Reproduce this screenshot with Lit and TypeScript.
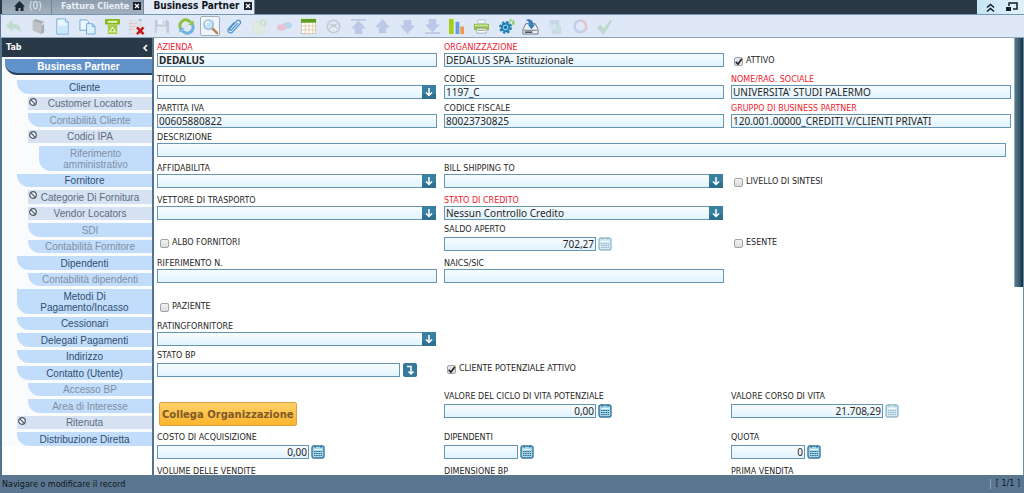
import { LitElement, html, svg, css, nothing } from "lit";
import { customElement, state } from "lit/decorators.js";
import { classMap } from "lit/directives/class-map.js";

interface NavItem {
  text: string;
  level: 1 | 2 | 3;
  readOnly?: boolean;
}

const NAV: NavItem[] = [
  { text: "Cliente", level: 1 },
  { text: "Customer Locators", level: 2, readOnly: true },
  { text: "Contabilità Cliente", level: 2 },
  { text: "Codici IPA", level: 2, readOnly: true },
  { text: "Riferimento amministrativo", level: 3 },
  { text: "Fornitore", level: 1 },
  { text: "Categorie Di Fornitura", level: 2, readOnly: true },
  { text: "Vendor Locators", level: 2, readOnly: true },
  { text: "SDI", level: 2 },
  { text: "Contabilità Fornitore", level: 2 },
  { text: "Dipendenti", level: 1 },
  { text: "Contabilità dipendenti", level: 2 },
  { text: "Metodi Di Pagamento/Incasso", level: 1 },
  { text: "Cessionari", level: 1 },
  { text: "Delegati Pagamenti", level: 1 },
  { text: "Indirizzo", level: 1 },
  { text: "Contatto (Utente)", level: 1 },
  { text: "Accesso BP", level: 2 },
  { text: "Area di Interesse", level: 2 },
  { text: "Ritenuta", level: 1, readOnly: true },
  { text: "Distribuzione Diretta", level: 1 },
];

interface Tool {
  name: string;
  art: unknown;
  off?: boolean;
  active?: boolean;
}

const page = svg`<path d="M3 1h9l3 3v13H3z" fill="#eaf7fe" stroke="#6fa9d4"/><path d="M4 8h10v8H4z" fill="#c9e8fa"/><path d="M12 1v3h3" fill="#fff" stroke="#6fa9d4"/>`;

const TOOLS: Tool[] = [
  { name: "Annulla", off: true, art: svg`<path d="M1 8l7-6v4c6 0 9 3 9 10-2-4-5-5-9-5v4z" fill="#8fcb8e"/>` },
  { name: "Aiuto", art: svg`<path d="M3 3l3-2 9 3v11l-3 2-9-4z" fill="#a9adb3"/><path d="M3 3l9 3v11l-9-4z" fill="#bfc2c6"/><path d="M12.500 6l2.500-2v2l-2.500 2z" fill="#e9ebee"/>` },
  { name: "Nuovo", art: page },
  { name: "Copia", art: svg`<path d="M1 2h7l2 2v9H1z" fill="#eaf7fe" stroke="#6fa9d4"/><path d="M8 6h6l3 3v8H8z" fill="#dbf1fd" stroke="#6fa9d4"/><path d="M14 6v3h3" fill="none" stroke="#6fa9d4"/>` },
  { name: "Elimina", art: svg`<rect x="1" y="1" width="16" height="6" rx="1" fill="#86b81f"/><rect x="4" y="3" width="10" height="2" fill="#e7f5c5"/><path d="M4 7h10v10H4z" fill="#a6ce45"/><path d="M9 9l4 6H5z" fill="#f2fadf"/><path d="M9 11l2 3H7z" fill="#86b81f"/>` },
  { name: "Elimina selezione", art: svg`<path d="M2 3h9l2 2v12H2z" fill="#e6e6ea" stroke="#d3d4da"/><path d="M1 6h9M1 9h8M1 12h6" stroke="#d5bfc3"/><path d="M12 1l2 2" stroke="#68759b"/><path d="M9.500 10l7 7M16.500 10l-7 7" stroke="#c4161c" stroke-width="2.600"/>` },
  { name: "Salva", off: true, art: svg`<path d="M2 2h13l2 2v12H2z" fill="#959ba5"/><rect x="5" y="2" width="8" height="5" fill="#fff"/><rect x="4" y="9" width="10" height="7" fill="#e9ecf2"/><rect x="10" y="3" width="2" height="3" fill="#959ba5"/>` },
  { name: "Aggiorna", art: svg`<path d="M3 11.500A6.200 6.200 0 0 1 13.500 4.800" fill="none" stroke="#8dc044" stroke-width="3.200"/><path d="M15 6.500a6.200 6.200 0 0 1-10.500 6.700" fill="none" stroke="#6fb0dc" stroke-width="3.200"/><path d="M11 7.500h5.500V2.500z" fill="#8dc044"/><path d="M7 10.500H1.500v5z" fill="#6fb0dc"/>` },
  { name: "Cerca", active: true, art: svg`<path d="M11 11l5 5" stroke="#b78455" stroke-width="2.600" stroke-linecap="round"/><circle cx="7" cy="7" r="5" fill="#c3e4fa" stroke="#9db9d2" stroke-width="1.500"/><path d="M4 7a3 3 0 0 1 3-3" fill="none" stroke="#fff" stroke-width="1.500"/>` },
  { name: "Allegato", art: svg`<path d="M12.500 5.500l-6.500 7c-1.500 1.500-3-.2-1.800-1.600l7-7.600c2.300-2.400 5.600.4 3.600 2.900l-7.500 8.300c-3 3-7 0-4.500-3.300l6-6.400" fill="none" stroke="#4a93cb" stroke-width="1.300"/>` },
  { name: "Nota", off: true, art: svg`<rect x="2" y="4" width="12" height="12" fill="#e6eec0" stroke="#d5dfa8"/><circle cx="13" cy="5" r="3.500" fill="#9fce8f"/><path d="M13 3v4M11 5h4" stroke="#fff"/>` },
  { name: "Chat", off: true, art: svg`<ellipse cx="12" cy="8" rx="5" ry="3.500" fill="#7fb5e6"/><ellipse cx="6" cy="10" rx="5" ry="3.500" fill="#ec8c9c"/>` },
  { name: "Griglia", art: svg`<rect x="1.500" y="1.500" width="15" height="15" fill="#fff" stroke="#d6c3b0"/><rect x="1" y="1" width="16" height="4" fill="#5c9e1d"/><path d="M1 8.500h16M1 12.500h16M5.500 5v12M9.500 5v12M13.500 5v12" stroke="#e3c9a8"/>` },
  { name: "Cronologia", off: true, art: svg`<circle cx="9" cy="9" r="6.500" fill="#edf0f2" stroke="#9aa5ab" stroke-width="2"/><path d="M5 11l4-4 4 4M5 6l4 3 4-3" fill="none" stroke="#9aa5ab" stroke-width="1.500"/>` },
  { name: "Primo", off: true, art: svg`<path d="M1 1h16v1.800H1zM9 3l8 8h-4v6H5v-6H1z" fill="#8296cf"/>` },
  { name: "Precedente", off: true, art: svg`<path d="M9 1l8 9h-4v6H5v-6H1z" fill="#8296cf"/>` },
  { name: "Successivo", off: true, art: svg`<path d="M9 17l8-9h-4V2H5v6H1z" fill="#8296cf"/>` },
  { name: "Ultimo", off: true, art: svg`<path d="M1 17h16v-1.800H1zM9 15l8-8h-4V1H5v6H1z" fill="#8296cf"/>` },
  { name: "Report", art: svg`<rect x="1" y="1" width="5" height="16" fill="#a4cf17"/><rect x="8" y="4" width="4" height="13" fill="#6f9cd8"/><rect x="13" y="9" width="4" height="8" fill="#ee9a52"/>` },
  { name: "Stampa", art: svg`<path d="M5 2h8v4H5z" fill="#eef5fb" stroke="#b5c3cf"/><rect x="1" y="6" width="16" height="7" rx="1" fill="#8fbe45"/><rect x="2" y="7" width="14" height="2" fill="#c7e392"/><path d="M4 11h10v5H4z" fill="#fff" stroke="#9ab0c1"/><path d="M5 13h8" stroke="#7c9a54"/>` },
  { name: "Processo", art: svg`<circle cx="14" cy="5" r="2.500" fill="none" stroke="#8fcb6d" stroke-width="2.500" stroke-dasharray="2 1"/><circle cx="8" cy="10" r="5.500" fill="none" stroke="#1c7fb3" stroke-width="2.500" stroke-dasharray="2.500 1.800"/><circle cx="8" cy="10" r="4" fill="#7cc3e8" stroke="#1c7fb3" stroke-width="2"/><circle cx="8" cy="10" r="1.500" fill="#155d88"/>` },
  { name: "Archivio", art: svg`<path d="M4 6h10l3 6v5H1v-5z" fill="#eceff3" stroke="#69737e"/><path d="M2 13h14" stroke="#69737e"/><path d="M3 15h8" stroke="#3c4650" stroke-width="1.500"/><path d="M4 2c5-2 8 1 8 5h2l-4 5-4-5h2c0-3-2-4-4-5z" fill="#367fb8"/>` },
  { name: "Richieste", off: true, art: svg`<rect x="3" y="2" width="10" height="7" rx="1" fill="#96b8ce"/><rect x="5" y="8" width="10" height="9" rx="1" fill="#a8cbbf"/><rect x="2" y="6" width="8" height="6" fill="#c7dce9"/>` },
  { name: "Workflow", off: true, art: svg`<path d="M3 11A6.500 6.500 0 0 1 9 2.500" fill="none" stroke="#7fa9dd" stroke-width="2.600"/><path d="M9 2.500a6.500 6.500 0 0 1 5 10" fill="none" stroke="#e98d78" stroke-width="2.600"/><path d="M14 12.500a6.500 6.500 0 0 1-11-1.500" fill="none" stroke="#9fa8d8" stroke-width="2.600"/>` },
  { name: "Conferma", off: true, art: svg`<path d="M1 10l4-3 3 4 7-9 2 1-8 14H7z" fill="#85c690"/>` },
];

@customElement("app-root")
export class AppRoot extends LitElement {
  @state() private current = "";

  static styles = css`
    :host {
      display: flex;
      flex-direction: column;
      height: 100vh;
      overflow: hidden;
      background: #fff;
      color: #262626;
      font-family: "DejaVu Sans", Verdana, sans-serif;
      font-size: 8px;
    }
    * { box-sizing: border-box; }
    button, input, select { font: inherit; color: inherit; margin: 0; }
    button { border: 0; padding: 0; background: none; }
    svg { display: block; }

    .top {
      display: flex;
      height: 15px;
      flex: none;
      padding-left: 2px;
      background: #2b3947;
      border-bottom: 1px solid #7197b5;
      font: bold 10px/12px "DejaVu Sans Condensed", "DejaVu Sans", sans-serif;
    }
    .tab {
      display: flex;
      align-items: center;
      gap: 4px;
      padding: 0 2px 2px 9px;
      background: linear-gradient(#8e9dac, #a3b1bf);
      border-right: 1px solid #74889b;
      color: #e9eff5;
      font-size: 9px;
      white-space: nowrap;
    }
    .home { width: 50px; padding-left: 12px; font-size: 10px; font-weight: normal; }
    .tab.on { background: #e3ecf8; color: #10151b; font-size: 10px; }
    .close { width: 8px; height: 8px; background: #16202a; color: #fff; }
    .corner {
      display: flex;
      align-items: center;
      gap: 11px;
      margin-left: auto;
      padding: 0 6px 0 9px;
      background: linear-gradient(90deg, #c5e4f6, #e2f1fa);
    }

    .tools {
      display: flex;
      flex: none;
      height: 23px;
      background: #dfe8f6;
      border-bottom: 1px solid #8fa5ba;
      border-left: 1px solid #5b7994;
    }
    .toolset { display: flex; flex: 0 1 616px; align-items: center; }
    .tool {
      display: flex;
      flex: 1 1 0;
      height: 20px;
      min-width: 0;
      align-items: center;
      justify-content: center;
    }
    .tool.off svg { opacity: 0.38; }
    .tool.active {
      background: #f1f5fb;
      border: 1px solid #a3afbd;
      border-radius: 2px;
      flex: 0 0 20px;
      margin: 0 2px;
    }

    .body { display: flex; flex: 1; min-height: 0; }
    .side {
      flex: none;
      width: 154px;
      border: solid #54738c;
      border-width: 0 2px;
    }
    .sidehead {
      display: flex;
      height: 19px;
      align-items: center;
      justify-content: space-between;
      padding: 0 4px;
      background: #293948;
      color: #fff;
      font-weight: bold;
    }
    .nav {
      padding: 2px 0 0 3px;
      background: #f9fbfd;
      font: 10px/11px "Liberation Sans", Arial, sans-serif;
    }
    .main {
      display: block;
      width: 100%;
      height: 16px;
      background: #6292ca;
      border-bottom: 2px solid #28405c;
      border-radius: 0 0 0 12px;
      color: #fff;
      font-weight: bold;
    }
    .list {
      display: flex;
      flex-direction: column;
      gap: 3px;
      margin: 0;
      padding: 5px 0 0 12px;
      list-style: none;
    }
    .item {
      display: block;
      position: relative;
      width: 100%;
      padding: 1px 12px;
      background: #c2dcfb;
      border-radius: 0 0 0 12px;
      color: #2f4f70;
      text-align: center;
    }
    .list li:nth-child(odd) .item { padding-top: 2px; }
    .l2 { padding-left: 11px; }
    .l3 { padding-left: 22px; }
    .l2 .item, .l3 .item { color: #8090a3; }
    .item.ro, .l2 .item.ro { background: #d6e1f1; color: #5d6d7f; border-radius: 0; }
    .ban { position: absolute; left: 1px; top: 1px; }

    .scroll { flex: 1; min-width: 0; overflow: hidden; padding: 3px 3px 0 3px; }
    .form {
      display: grid;
      grid-template-columns: repeat(3, minmax(0, 1fr));
      grid-template-rows: 32px 29px 29px 31px 32px 29px 34px 30px 33px 29px 41px 41px 34px;
      column-gap: 7px;
    }
    .cell { display: flex; flex-direction: column; min-width: 0; }
    .cell.all { grid-column: 1 / -1; padding-right: 5px; }
    .lab { display: block; height: 12px; line-height: 14px; white-space: nowrap; }
    .lab.req { color: #f0202c; }
    .line { display: flex; align-items: center; gap: 2px; }
    .low .line { padding-top: 2px; }
    .box {
      display: block;
      width: 100%;
      height: 14px;
      padding: 0 0 0 1px;
      border: 1px solid #6595b3;
      border-radius: 0;
      outline: 0;
      background: linear-gradient(#f7fcff, #e1f3fd);
      font: 10px/12px "Noto Sans", "DejaVu Sans", sans-serif;
      appearance: none;
    }
    .box.strong { font-weight: bold; }
    .box.num { width: 152px; padding: 0 1px 0 0; text-align: right; }
    .box.short { width: 74px; }
    .box.mid { width: 243px; margin-right: 1px; }
    .combo { position: relative; margin-right: 1px; }
    .drop {
      position: absolute;
      right: 0;
      top: 0;
      width: 14px;
      height: 14px;
      pointer-events: none;
    }
    .mini { flex: none; width: 14px; height: 14px; }
    .mini.dim { opacity: 0.5; }
    .check {
      display: flex;
      align-items: center;
      gap: 3px;
      height: 12px;
      margin: 14px 0 0 3px;
      line-height: 12px;
    }
    .check input {
      appearance: none;
      flex: none;
      width: 9px;
      height: 9px;
      border: 1px solid #a3a3a3;
      border-radius: 2px;
      background: linear-gradient(#f2f2f2, #dcdcdc);
    }
    .check input:checked {
      background: url("data:image/svg+xml,%3Csvg xmlns='http://www.w3.org/2000/svg' viewBox='0 0 8 8'%3E%3Cpath d='M1.200 4l2 2.300L7 1.200' fill='none' stroke='%23222' stroke-width='1.600'/%3E%3C/svg%3E") center / 8px 8px no-repeat, #dfe5f0;
    }
    .link {
      align-self: flex-start;
      height: 24px;
      margin: 12px 0 0 2px;
      padding: 0 2px;
      border: 1px solid #e0a040;
      border-radius: 2px;
      background: linear-gradient(#ffd16a, #fdb52c);
      color: #7d5a2c;
      font-size: 10px;
      font-weight: bold;
      white-space: nowrap;
    }
    .bar {
      flex: none;
      width: 9px;
      height: 57%;
      border-left: 1px solid #8fa9b5;
      background: linear-gradient(90deg, #53798a, #3c5f72 50%, #142c42);
    }
    .edge { flex: none; width: 1px; background: #6c8daa; }

    .status {
      display: flex;
      flex: none;
      height: 18px;
      align-items: center;
      justify-content: space-between;
      padding: 0 4px 0 2px;
      background: #5b7690;
      color: #0d1620;
    }
    .count { border-left: 1px solid #8ba3b9; padding-left: 5px; line-height: 10px; }
  `;

  private closeIcon = () => html`<button class="close" aria-label="Chiudi">
    <svg width="8" height="8" viewBox="0 0 8 8"><path d="M2 2l4 4M6 2L2 6" stroke="#fff" stroke-width="1.200" /></svg>
  </button>`;

  private label(id: string, text: string, req = false) {
    return html`<label class=${classMap({ lab: true, req })} for=${id}>${text}</label>`;
  }

  private text(id: string, text: string, value = "", req = false, strong = false) {
    return html`<div class="cell">
      ${this.label(id, text, req)}
      <input class=${classMap({ box: true, strong })} id=${id} .value=${value} />
    </div>`;
  }

  private combo(id: string, text: string, value = "", req = false) {
    return html`<div class="cell">
      ${this.label(id, text, req)}
      <div class="combo">
        <select class="box" id=${id}><option>${value}</option></select>
        <svg class="drop" viewBox="0 0 14 14">
          <rect width="14" height="14" fill="#397f9f" /><rect y="9" width="14" height="5" fill="#2f6f8f" />
          <path d="M7 3v7M4 7.500l3 3 3-3" fill="none" stroke="#fff" stroke-width="1.500" />
        </svg>
      </div>
    </div>`;
  }

  private num(id: string, text: string, value: string, short = false, dim = false) {
    return html`<div class="cell low">
      ${this.label(id, text)}
      <div class="line">
        <input class=${classMap({ box: true, num: true, short })} id=${id} .value=${value} />
        <button class=${classMap({ mini: true, dim })} aria-label="Calcolatrice">
          <svg width="14" height="14" viewBox="0 0 14 14">
            <rect x="1" y="1" width="12" height="12" rx="2" fill="#a9d5ea" stroke="#33789c" stroke-width="1.400" />
            <path d="M4 0v3M10 0v3" stroke="#33789c" />
            <path d="M3 4.500h8" stroke="#e9f7fd" />
            <path d="M3 6.500h8M3 8.500h8M3 10.500h8" stroke="#2d6d90" stroke-dasharray="1.500 .7" />
          </svg>
        </button>
      </div>
    </div>`;
  }

  private check(id: string, text: string, on = false) {
    return html`<div class="cell">
      <div class="check"><input type="checkbox" id=${id} .checked=${on} /><label for=${id}>${text}</label></div>
    </div>`;
  }

  private cut = (id: string, text: string) => html`<div class="cell low">${this.label(id, text)}
    <div class="line"><input class="box num" id=${id} /></div></div>`;

  render() {
    return html`
      <header class="top">
        <div class="tab home">
          <svg width="11" height="10" viewBox="0 0 11 10"><path d="M5.500 0L11 5.500H9.500V10h-3V7h-2v3h-3V5.500H0z" fill="#1d2935" /></svg>
          <span>(0)</span>
        </div>
        <div class="tab"><span>Fattura Cliente</span>${this.closeIcon()}</div>
        <div class="tab on"><span>Business Partner</span>${this.closeIcon()}</div>
        <div class="corner">
          <button aria-label="Comprimi">
            <svg width="9" height="9" viewBox="0 0 9 9"><path d="M1 4.500l3.500-3 3.500 3M1 8.500l3.500-3 3.500 3" fill="none" stroke="#141c24" stroke-width="1.500" /></svg>
          </button>
          <button aria-label="Finestra">
            <svg width="12" height="10" viewBox="0 0 12 10"><path d="M3 4V1h8v6H7" fill="none" stroke="#141c24" stroke-width="1.500" /><rect y="5" width="5" height="4" fill="#141c24" /></svg>
          </button>
        </div>
      </header>

      <div class="tools">
        <div class="toolset">
          ${TOOLS.map(
            (t) => html`<button class=${classMap({ tool: true, off: !!t.off, active: !!t.active })} aria-label=${t.name}>
              <svg width="17" height="17" viewBox="0 0 18 18">${t.art}</svg>
            </button>`
          )}
        </div>
      </div>

      <div class="body">
        <aside class="side">
          <div class="sidehead">
            <span>Tab</span>
            <svg width="6" height="8" viewBox="0 0 6 8"><path d="M5 1L2 4l3 3" fill="none" stroke="#fff" stroke-width="1.700" /></svg>
          </div>
          <nav class="nav">
            <button class="main">Business Partner</button>
            <ul class="list">
              ${NAV.map(
                (n) => html`<li class=${"l" + n.level}>
                  <button
                    class=${classMap({ item: true, ro: !!n.readOnly })}
                    aria-current=${this.current === n.text ? "true" : "false"}
                    @click=${() => (this.current = n.text)}
                  >${n.readOnly
                      ? html`<svg class="ban" width="8" height="8" viewBox="0 0 8 8"><circle cx="4" cy="4" r="3.300" fill="#eef2f6" stroke="#4c5965" stroke-width="1.200" /><path d="M1.700 1.700l4.600 4.600" stroke="#4c5965" stroke-width="1.200" /></svg>`
                      : nothing}${n.text}</button>
                </li>`
              )}
            </ul>
          </nav>
        </aside>

        <main class="scroll">
          <form class="form" @submit=${(e: Event) => e.preventDefault()}>
            ${this.text("azienda", "AZIENDA", "DEDALUS", true, true)}
            ${this.text("org", "ORGANIZZAZIONE", "DEDALUS SPA- Istituzionale", true)}
            ${this.check("attivo", "ATTIVO", true)}

            ${this.combo("titolo", "TITOLO")}
            ${this.text("codice", "CODICE", "1197_C")}
            ${this.text("nome", "NOME/RAG. SOCIALE", "UNIVERSITA' STUDI PALERMO", true)}

            ${this.text("iva", "PARTITA IVA", "00605880822")}
            ${this.text("cf", "CODICE FISCALE", "80023730825")}
            ${this.text("gruppo", "GRUPPO DI BUSINESS PARTNER", "120.001.00000_CREDITI V/CLIENTI PRIVATI", true)}

            <div class="cell all">${this.label("descr", "DESCRIZIONE")}<input class="box" id="descr" /></div>

            ${this.combo("affid", "AFFIDABILITA")}
            ${this.combo("bill", "BILL SHIPPING TO")}
            ${this.check("sintesi", "LIVELLO DI SINTESI")}

            ${this.combo("vettore", "VETTORE DI TRASPORTO")}
            ${this.combo("stato", "STATO DI CREDITO", "Nessun Controllo Credito", true)}
            <div></div>

            ${this.check("albo", "ALBO FORNITORI")}
            ${this.num("saldo", "SALDO APERTO", "702,27", false, true)}
            ${this.check("esente", "ESENTE")}

            ${this.text("rif", "RIFERIMENTO N.")}
            ${this.text("naics", "NAICS/SIC")}
            <div></div>

            ${this.check("paziente", "PAZIENTE")}
            <div></div>
            <div></div>

            ${this.combo("rating", "RATINGFORNITORE")}
            <div></div>
            <div></div>

            <div class="cell low">
              ${this.label("statobp", "STATO BP")}
              <div class="line">
                <input class="box mid" id="statobp" />
                <button class="mini" aria-label="Apri elenco">
                  <svg width="14" height="14" viewBox="0 0 14 14">
                    <rect width="14" height="14" rx="2" fill="#35799b" />
                    <path d="M4 3.500h4V10M5.500 8.500L8 11l2.500-2.500" fill="none" stroke="#fff" stroke-width="1.500" />
                  </svg>
                </button>
              </div>
            </div>
            ${this.check("potenziale", "CLIENTE POTENZIALE ATTIVO", true)}
            <div></div>

            <div class="cell"><button class="link">Collega Organizzazione</button></div>
            ${this.num("ciclo", "VALORE DEL CICLO DI VITA POTENZIALE", "0,00")}
            ${this.num("corso", "VALORE CORSO DI VITA", "21.708,29", false, true)}

            ${this.num("costo", "COSTO DI ACQUISIZIONE", "0,00")}
            ${this.num("dip", "DIPENDENTI", "", true)}
            ${this.num("quota", "QUOTA", "0", true)}

            ${this.cut("volume", "VOLUME DELLE VENDITE")}
            ${this.cut("dimensione", "DIMENSIONE BP")}
            ${this.cut("prima", "PRIMA VENDITA")}
          </form>
        </main>
        <div class="bar"></div>
        <div class="edge"></div>
      </div>

      <footer class="status">
        <span>Navigare o modificare il record</span>
        <span class="count">[ 1/1 ]</span>
      </footer>
    `;
  }
}
